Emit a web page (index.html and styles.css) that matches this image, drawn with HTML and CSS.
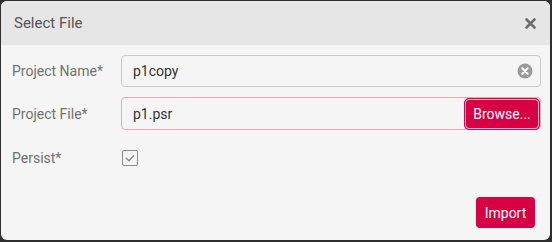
FILE: index.html
```html
<!DOCTYPE html>
<html>
<head>
<meta charset="utf-8">
<link rel="stylesheet" href="styles.css">
</head>
<body>
<div class="dialog">
  <div class="header">
    <span class="title">Select File</span>
    <svg class="close" width="11" height="11" viewBox="0 0 11 11"><path d="M1.5 1.5 L9.5 9.5 M9.5 1.5 L1.5 9.5" stroke="#6e6e6e" stroke-width="2.6" stroke-linecap="round"/></svg>
  </div>
  <div class="body">
    <div class="row">
      <label class="label">Project Name*</label>
      <div class="field">
        <span class="value">p1copy</span>
        <svg class="clear" width="16" height="16" viewBox="0 0 16 16"><circle cx="8" cy="8" r="7.5" fill="#9a9a9a"/><path d="M5.3 5.3 L10.7 10.7 M10.7 5.3 L5.3 10.7" stroke="#fff" stroke-width="2" stroke-linecap="round"/></svg>
      </div>
    </div>
    <div class="row">
      <label class="label">Project File*</label>
      <div class="field invalid">
        <span class="value">p1.psr</span>
        <button class="btn browse">Browse...</button>
      </div>
    </div>
    <div class="row check-row">
      <label class="label">Persist*</label>
      <span class="checkbox"><svg width="10" height="8" viewBox="0 0 10 8"><path d="M1 4 L4 6.8 L9 1.2" stroke="#8a8a8a" stroke-width="1.4" fill="none"/></svg></span>
    </div>
  </div>
  <div class="footer">
    <button class="btn import">Import</button>
  </div>
</div>
</body>
</html>
```
FILE: styles.css
```css
html, body { margin: 0; padding: 0; }
body {
  background: #2f2f2f;
  width: 552px;
  height: 242px;
  font-family: Roboto, "Liberation Sans", sans-serif;
}
.dialog {
  margin: 1px 2px 2px 1px;
  width: 549px;
  height: 239px;
  background: #f5f5f5;
  border-radius: 6px;
  overflow: hidden;
  display: flex;
  flex-direction: column;
}
.header {
  height: 44px;
  background: #e6e6e6;
  display: flex;
  align-items: center;
  justify-content: space-between;
  padding: 0 14px 0 13px;
  flex-shrink: 0;
}
.title {
  font-size: 15px;
  color: #555;
}
.close { display: block; margin-top: 1px; }
.body {
  padding: 10px 9px 0 11px;
  display: flex;
  flex-direction: column;
  gap: 10px;
}
.row {
  display: grid;
  grid-template-columns: 109px 1fr;
  align-items: center;
  min-height: 32px;
}
.label {
  font-size: 14px;
  color: #717171;
}
.field {
  box-sizing: border-box;
  height: 32px;
  border: 1px solid #c9c9c9;
  border-radius: 4px;
  display: flex;
  align-items: center;
  padding: 0 7px 0 11px;
  background: #f5f5f5;
}
.field.invalid {
  border-color: #efa9ae;
  padding-right: 1px;
  height: 33px;
}
.value {
  flex: 1;
  font-size: 14px;
  color: #333;
}
.clear { display: block; }
.btn {
  font-family: Roboto, "Liberation Sans", sans-serif;
  background: #d80045;
  color: #fff;
  border-radius: 4px;
  cursor: pointer;
}
.browse {
  height: 30px;
  width: 74px;
  font-size: 14px;
  padding: 0;
  border: 1px solid #f3b7c6;
  box-shadow: 0 0 0 1px #d80045;
}
.check-row { margin-top: 2px; }
.checkbox {
  box-sizing: border-box;
  width: 16px;
  height: 16px;
  border: 1px solid #8a8a8a;
  border-radius: 2px;
  display: flex;
  align-items: center;
  justify-content: center;
  margin-left: 1px;
}
.checkbox svg { display: block; }
.footer {
  margin-top: auto;
  display: flex;
  justify-content: flex-end;
  padding: 0 15px 12px 0;
}
.import {
  height: 31px;
  width: 59px;
  font-size: 14px;
  border: none;
  padding: 0;
}
```
